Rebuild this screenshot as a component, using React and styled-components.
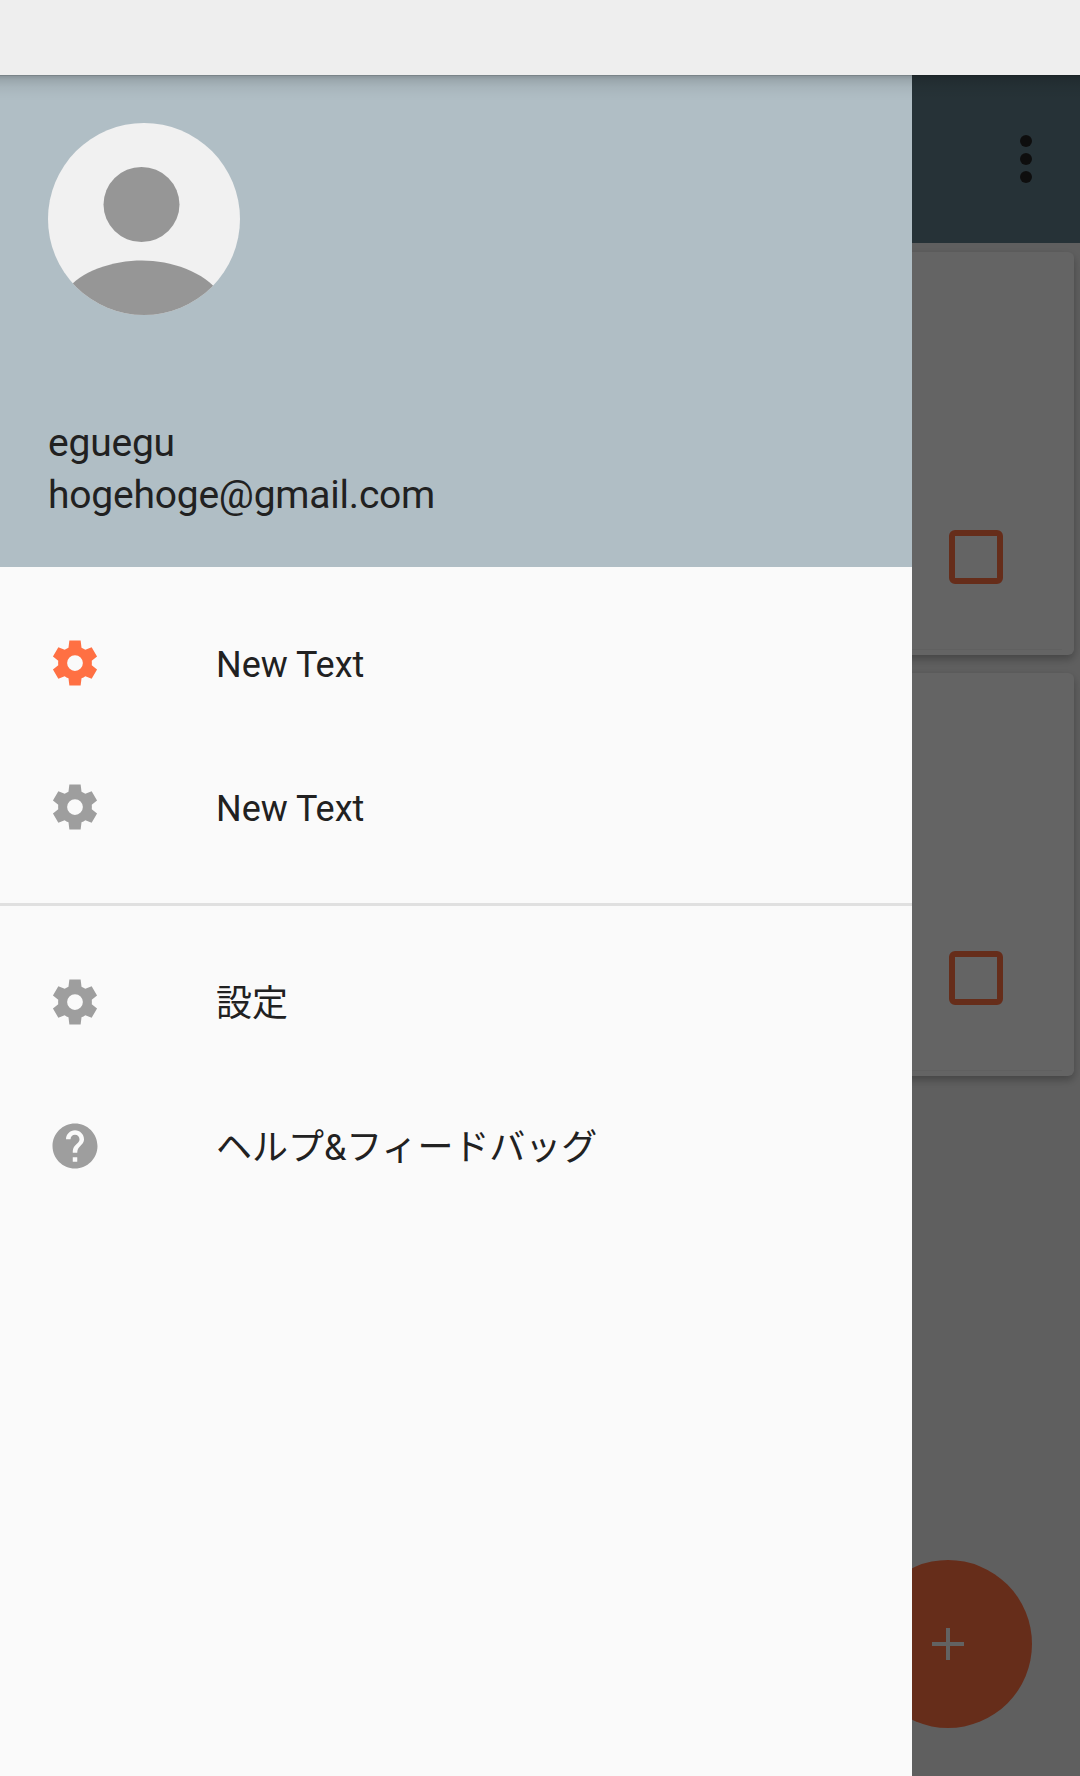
import React from "react";
import styled, { createGlobalStyle } from "styled-components";

const GlobalStyle = createGlobalStyle`
  * { box-sizing: border-box; }
  body { margin: 0; background: #eeeeee; }
  svg { display: block; }
`;

const Screen = styled.div`
  display: flex;
  flex-direction: column;
  width: 1080px;
  height: 1776px;
  overflow: hidden;
  font-family: Roboto, "Noto Sans CJK JP", sans-serif;
  color: #212121;
`;

const StatusBar = styled.div`
  flex: none;
  height: 75px;
  background: #eeeeee;
`;

const Stage = styled.div`
  position: relative;
  flex: 1;
  display: flex;
  flex-direction: column;
  background: #eeeeee;
  overflow: hidden;
`;

const Toolbar = styled.header`
  flex: none;
  display: flex;
  align-items: center;
  justify-content: flex-end;
  height: 168px;
  padding-right: 48px;
  background: #607d8b;
`;

const CardList = styled.main`
  display: flex;
  flex-direction: column;
  gap: 18px;
  padding: 9px 6px;
`;

const Card = styled.article`
  display: flex;
  flex-direction: column;
  align-items: flex-end;
  justify-content: flex-end;
  gap: 64px;
  height: 403px;
  padding-bottom: 5px;
  border-radius: 6px;
  background: #fafafa;
  box-shadow: 0 4px 9px rgba(0, 0, 0, 0.28);
`;

const Checkbox = styled.span`
  width: 54px;
  height: 54px;
  margin-right: 71px;
  border: 6px solid #ff7043;
  border-radius: 6px;
`;

const CardRule = styled.span`
  width: 100%;
  height: 1px;
  margin-top: 1px;
  border-right: 12px solid #fafafa;
  background: #f0f0f0;
`;

const Fab = styled.button`
  position: absolute;
  right: 48px;
  bottom: 48px;
  display: grid;
  place-items: center;
  width: 168px;
  height: 168px;
  padding: 0;
  border: 0;
  border-radius: 50%;
  background: #ff7043;
`;

const Scrim = styled.div`
  position: absolute;
  inset: 0;
  background: rgba(0, 0, 0, 0.6);
`;

const Drawer = styled.aside`
  position: absolute;
  inset: 0 auto 0 0;
  display: flex;
  flex-direction: column;
  width: 912px;
  background: #fafafa;
`;

const TopShadow = styled.div`
  position: absolute;
  inset: 0 0 auto 0;
  height: 26px;
  background: linear-gradient(
    rgba(0, 0, 0, 0.36) 0,
    rgba(0, 0, 0, 0.2) 1.5px,
    rgba(0, 0, 0, 0.12) 5px,
    rgba(0, 0, 0, 0.05) 12px,
    rgba(0, 0, 0, 0.015) 20px,
    rgba(0, 0, 0, 0) 100%
  );
`;

const Profile = styled.section`
  flex: none;
  display: flex;
  flex-direction: column;
  justify-content: space-between;
  height: 492px;
  padding: 48px 48px 46px;
  background: #b0bec5;
`;

const Account = styled.div`
  font-size: 39px;
  line-height: 52px;
  letter-spacing: -0.22px;
`;

const Menu = styled.nav`
  padding: 24px 0;
  border-top: ${(p) => (p.$divided ? "3px solid #e0e0e0" : "0")};
`;

const MenuItem = styled.a`
  display: flex;
  align-items: center;
  gap: 114px;
  height: 144px;
  padding-left: 48px;
  color: ${(p) => (p.$active ? "#ff7043" : "#9e9e9e")};
`;

const Label = styled.span`
  padding-top: 3px;
  font-size: 36px;
  line-height: 48px;
  letter-spacing: -0.04px;
  color: #212121;
`;

const Glyph = styled.svg`
  width: 54px;
  height: 54px;
  fill: currentColor;
`;

const Gear = () => (
  <Glyph viewBox="0 0 24 24">
    <path
      fillRule="evenodd"
      d="M9.500 2h5l.4 3.200q.9.350 1.700.950l2.800-1.200 2.400 4.200-2.350 1.850q.1 1 0 2l2.350 1.850-2.400 4.200-2.800-1.200q-.8.600-1.700.950l-.4 3.200h-5l-.4-3.200q-.9-.350-1.700-.950l-2.800 1.200-2.400-4.200L4.550 13q-.1-1 0-2L2.200 9.150l2.400-4.200 2.800 1.200q.8-.6 1.700-.950zM12 8.500a3.500 3.500 0 1 0 0 7a3.500 3.500 0 1 0 0-7z"
    />
  </Glyph>
);

const Help = () => (
  <Glyph viewBox="0 0 24 24">
    <path d="M12 2C6.480 2 2 6.480 2 12s4.480 10 10 10 10-4.480 10-10S17.520 2 12 2zm1 17h-2v-2h2v2zm2.070-7.750l-.9.920C13.450 12.900 13 13.500 13 15h-2v-.5c0-1.100.450-2.100 1.170-2.830l1.240-1.260c.370-.360.590-.860.590-1.410 0-1.100-.9-2-2-2s-2 .9-2 2H8c0-2.210 1.790-4 4-4s4 1.790 4 4c0 .880-.360 1.680-.930 2.250z" />
  </Glyph>
);

const Avatar = () => (
  <svg width="192" height="192" viewBox="0 0 192 192">
    <clipPath id="avatar">
      <circle cx="96" cy="96" r="96" />
    </clipPath>
    <g clipPath="url(#avatar)">
      <rect width="192" height="192" fill="#f1f1f1" />
      <ellipse cx="93.500" cy="81.500" rx="38" ry="37.500" fill="#969696" />
      <path d="M18 168C32 148 65 137.500 94 137.500s62 11 78 33v30H18z" fill="#969696" />
    </g>
  </svg>
);

const Overflow = () => (
  <svg width="12" height="48" viewBox="0 0 12 48" fill="#252525">
    <circle cx="6" cy="6" r="6" />
    <circle cx="6" cy="24" r="6" />
    <circle cx="6" cy="42" r="6" />
  </svg>
);

const Plus = () => (
  <svg width="32" height="32" viewBox="0 0 32 32" fill="#f5f5f5">
    <path d="M14 0h4v14h14v4H18v14h-4V18H0v-4h14z" />
  </svg>
);

const TaskCard = () => (
  <Card>
    <Checkbox />
    <CardRule />
  </Card>
);

export default function App() {
  return (
    <Screen>
      <GlobalStyle />
      <StatusBar />
      <Stage>
        <Toolbar>
          <Overflow />
        </Toolbar>
        <CardList>
          <TaskCard />
          <TaskCard />
        </CardList>
        <Fab aria-label="add">
          <Plus />
        </Fab>
        <Scrim />
        <Drawer>
          <Profile>
            <Avatar />
            <div>
              <Account>eguegu</Account>
              <Account>hogehoge@gmail.com</Account>
            </div>
          </Profile>
          <Menu>
            <MenuItem $active>
              <Gear />
              <Label>New Text</Label>
            </MenuItem>
            <MenuItem>
              <Gear />
              <Label>New Text</Label>
            </MenuItem>
          </Menu>
          <Menu $divided>
            <MenuItem>
              <Gear />
              <Label>設定</Label>
            </MenuItem>
            <MenuItem>
              <Help />
              <Label>ヘルプ&amp;フィードバッグ</Label>
            </MenuItem>
          </Menu>
        </Drawer>
        <TopShadow />
      </Stage>
    </Screen>
  );
}
